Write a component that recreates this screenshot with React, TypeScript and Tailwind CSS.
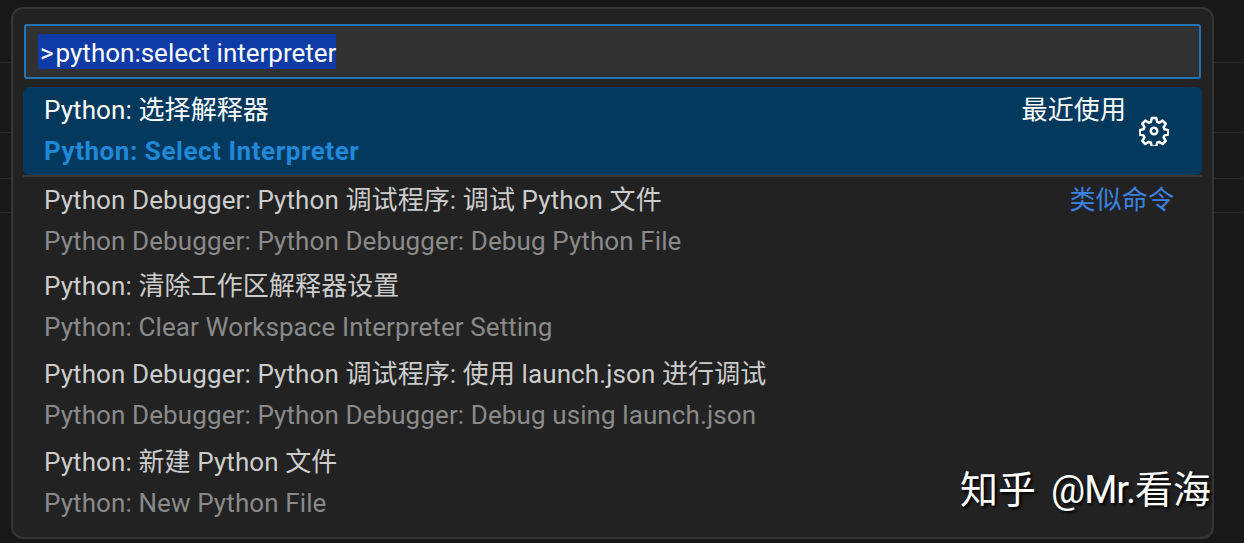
const rows = [
  { title: "Python Debugger: Python 调试程序: 调试 Python 文件", sub: "Python Debugger: Python Debugger: Debug Python File", height: "h-[86px]", tag: "类似命令" },
  { title: "Python: 清除工作区解释器设置", sub: "Python: Clear Workspace Interpreter Setting", height: "h-[88px]" },
  { title: "Python Debugger: Python 调试程序: 使用 launch.json 进行调试", sub: "Python Debugger: Python Debugger: Debug using launch.json", height: "h-[88px]" },
  { title: "Python: 新建 Python 文件", sub: "Python: New Python File", height: "h-[88px]" },
]

function Gear() {
  return (
    <svg viewBox="0 0 24 24" className="h-[30px] w-[30px]" fill="none" stroke="white" strokeWidth="2" strokeLinejoin="round">
      <path d="M10.2 1.6h3.6l.7 3.1 1.7.7 2.7-1.7 2.5 2.5-1.7 2.7.7 1.7 3 .7v3.5l-3 .7-.7 1.7 1.7 2.7-2.5 2.5-2.7-1.7-1.7.7-.7 3h-3.6l-.7-3-1.7-.7-2.7 1.7-2.5-2.5 1.7-2.7-.7-1.7-3-.7v-3.5l3-.7.7-1.7-1.7-2.7 2.5-2.5 2.7 1.7 1.7-.7z" />
      <circle cx="12" cy="12" r="2.6" />
    </svg>
  )
}

export default function App() {
  return (
    <div className="relative h-[543px] w-[1244px] overflow-hidden bg-[#181818] pl-[11px] pt-[7px] font-['Roboto','Noto_Sans_CJK_SC',sans-serif]">
      {/* faint editor lines behind the palette */}
      <div className="absolute left-0 right-0 top-[62px] h-px bg-[#2b2b2b]" />
      <div className="absolute left-0 right-0 top-[132px] h-px bg-[#2b2b2b]" />
      <div className="absolute left-0 right-0 top-[178px] h-px bg-[#2b2b2b]" />
      <div className="absolute left-0 right-0 top-[212px] h-px bg-[#2b2b2b]" />

      {/* Palette */}
      <div className="relative h-[532px] w-[1203px] rounded-[12px] border-2 border-[#363636] bg-[#222222] px-[10px] pt-[15px] text-[26px] tracking-[0.1px]">
        <div className="mx-[1px] flex h-[55px] items-center rounded-[3px] border-2 border-[#2374b5] bg-[#313131] pl-[12px]">
          <span className="flex h-[35px] items-center bg-[#0f3ba6] pt-[2px] leading-none tracking-normal text-white">
            <span className="pl-[2px] pr-[2px]">&gt;</span>python:select interpreter
          </span>
        </div>

        <div className="mt-[8px] flex h-[88px] items-center justify-between rounded-[6px] bg-[#04395e] pl-[21px] pr-[33px]">
          <div className="flex-1 pb-[6px]">
            <div className="flex h-[47px] items-center justify-between pr-[13px] text-white">
              <span>Python: 选择解释器</span>
              <span>最近使用</span>
            </div>
            <div className="flex h-[35px] items-center font-bold tracking-[0.55px] text-[#2088d8]">Python: Select Interpreter</div>
          </div>
          <Gear />
        </div>
        <div className="h-[2px] bg-[#3a3a3a]" />

        {rows.map((row) => (
          <div key={row.sub} className={`${row.height} pl-[21px]`}>
            <div className="flex h-[46px] items-center justify-between pr-[28px] text-[#cccccc]">
              <span>{row.title}</span>
              {row.tag && <span className="text-[#3b82e0]">{row.tag}</span>}
            </div>
            <div className="flex h-[36px] items-center pt-[1px] text-[#8a8a8a]">{row.sub}</div>
          </div>
        ))}
      </div>

      {/* Watermark */}
      <div className="absolute left-[960px] top-[466px] text-[38px] leading-[48px] text-white [text-shadow:2px_2px_3px_#000]">
        知乎<span className="ml-[15px] tracking-[-1px]">@Mr.</span>看海
      </div>
    </div>
  )
}
